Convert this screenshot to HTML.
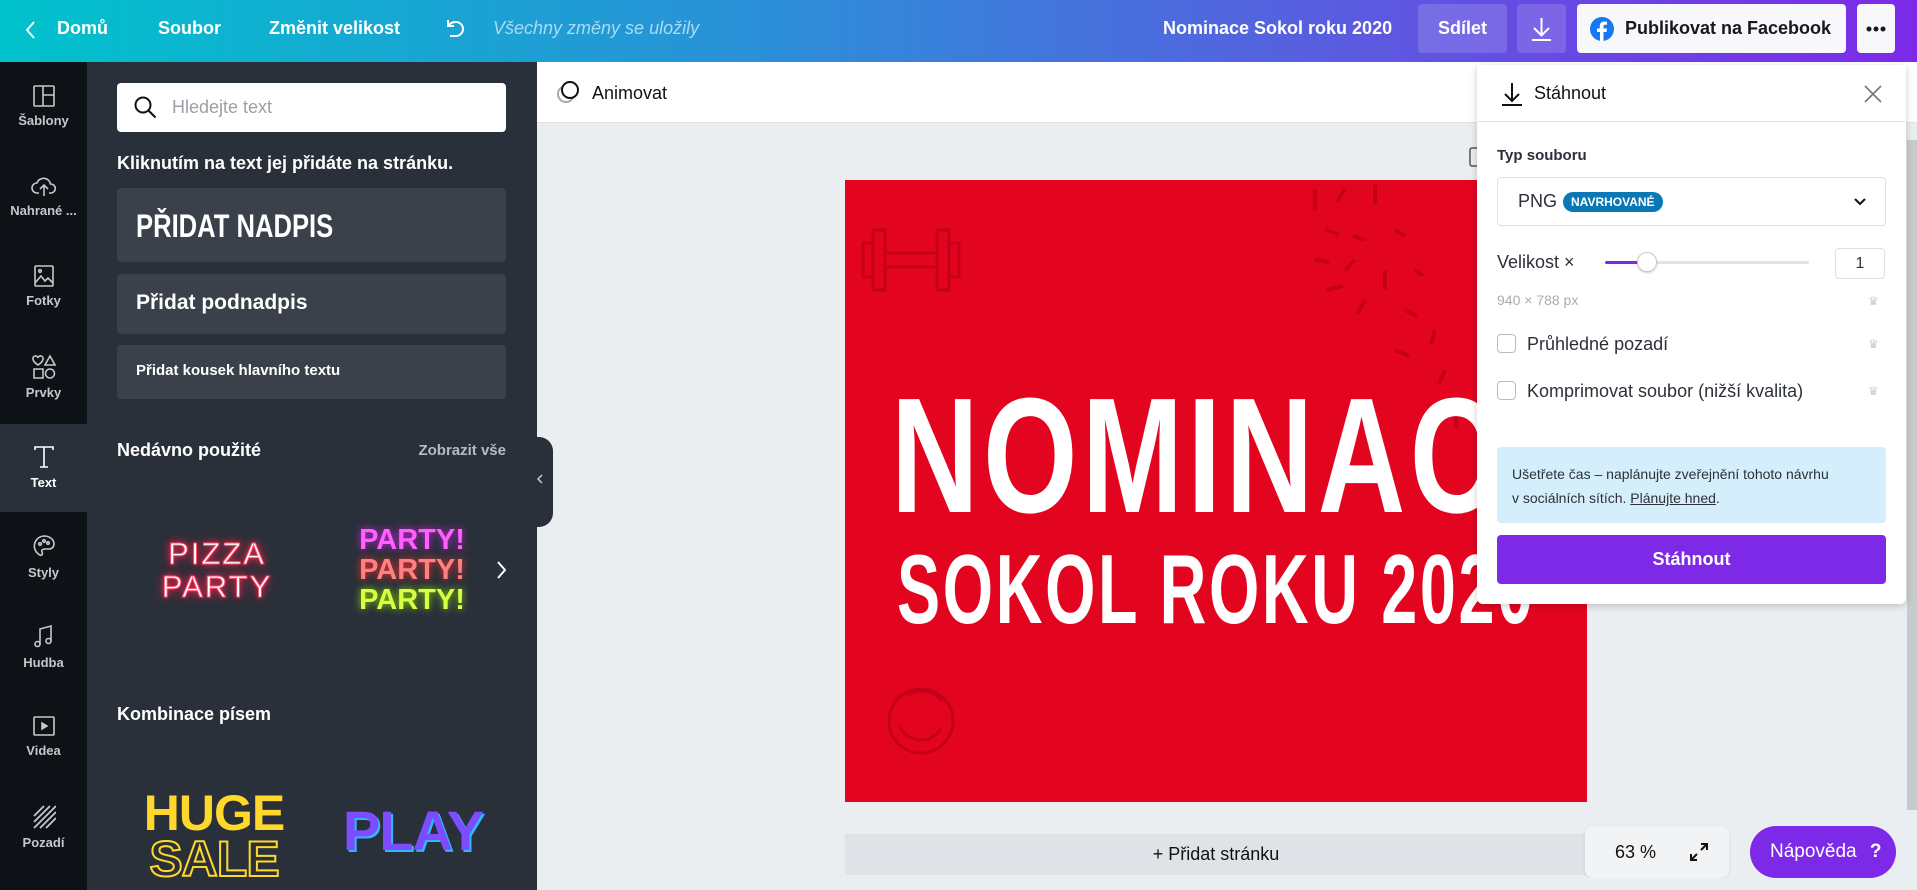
<!DOCTYPE html>
<html><head><meta charset="utf-8"><style>
*{box-sizing:border-box;margin:0;padding:0}
body{width:1917px;height:890px;overflow:hidden;font-family:"Liberation Sans",sans-serif;background:#ebeef1;position:relative}
.abs{position:absolute}
.hdr{left:0;top:0;width:1917px;height:62px;background:linear-gradient(90deg,#00c2cc 0%,#2b8fd8 40%,#5a5ce0 70%,#7d2ae8 100%)}
.hdr .t{position:absolute;top:18px;color:#fff;font-size:18px;font-weight:bold}
.rail{left:0;top:62px;width:87px;height:828px;background:#0e1217}
.ri{position:absolute;left:0;width:87px;text-align:center;color:#c5c8cc;font-size:13px;font-weight:bold}
.ri svg{display:block;margin:0 auto 5px}
.panel{left:87px;top:62px;width:450px;height:828px;background:#293039;overflow:hidden}
.card{position:absolute;left:30px;width:389px;background:#3a414a;border-radius:4px;color:#fff;font-weight:bold}
.dl{left:1477px;top:65px;width:429px;height:539px;background:#fff;border-radius:0 0 6px 6px;box-shadow:0 2px 8px rgba(0,0,0,.2)}
.dl .lbl{position:absolute;left:20px;color:#2c3038}
.crown{position:absolute;right:26px;width:12px;height:10px;color:#ccc;font-size:12px}
</style></head><body>
<div class="abs hdr">
 <svg class="abs" style="left:24px;top:19px" width="14" height="22" viewBox="0 0 14 22"><path d="M10 3L3 11l7 8" stroke="#fff" stroke-width="2" fill="none"/></svg>
 <div class="t" style="left:57px">Domů</div>
 <div class="t" style="left:158px">Soubor</div>
 <div class="t" style="left:269px">Změnit velikost</div>
 <svg class="abs" style="left:442px;top:16px" width="26" height="26" viewBox="0 0 26 26"><path d="M6 4v6h6M6 10c2-3 5-4 8-4a7 7 0 010 14H8" stroke="#fff" stroke-width="2" fill="none"/></svg>
 <div class="t" style="left:493px;font-weight:normal;font-style:italic;color:#a8dcf0">Všechny změny se uložily</div>
 <div class="t" style="left:1163px">Nominace Sokol roku 2020</div>
 <div class="abs" style="left:1418px;top:4px;width:89px;height:49px;background:rgba(255,255,255,.15);border-radius:4px;color:#fff;font-weight:bold;font-size:18px;text-align:center;line-height:49px">Sdílet</div>
 <div class="abs" style="left:1517px;top:4px;width:49px;height:49px;background:rgba(255,255,255,.15);border-radius:4px"><svg width="49" height="49" viewBox="0 0 49 49"><path d="M24.5 14v17M17 24l7.5 7.5L32 24M15 36h19" stroke="#fff" stroke-width="2" fill="none"/></svg></div>
 <div class="abs" style="left:1577px;top:4px;width:269px;height:49px;background:#f8f8fb;border-radius:4px">
  <svg class="abs" style="left:12px;top:12px" width="26" height="26" viewBox="0 0 26 26"><circle cx="13" cy="13" r="12" fill="#1877f2"/><path d="M14.5 25V16h3l.5-3.5h-3.5v-2c0-1 .3-1.7 1.8-1.7H18V5.7c-.3 0-1.4-.2-2.7-.2-2.7 0-4.5 1.6-4.5 4.6v2.4H8V16h3v9z" fill="#fff"/></svg>
  <div class="abs" style="left:48px;top:14px;font-size:18px;font-weight:bold;color:#17191c">Publikovat na Facebook</div>
 </div>
 <div class="abs" style="left:1857px;top:4px;width:38px;height:49px;background:#f8f8fb;border-radius:4px">
  <svg width="38" height="49" viewBox="0 0 38 49"><circle cx="12" cy="25" r="2.5" fill="#17191c"/><circle cx="19" cy="25" r="2.5" fill="#17191c"/><circle cx="26" cy="25" r="2.5" fill="#17191c"/></svg>
 </div>
</div>

<div class="abs rail">
 <div class="ri" style="top:22px"><svg width="24" height="24" viewBox="0 0 24 24" fill="none" stroke="#c5c8cc" stroke-width="1.6"><rect x="2" y="2" width="20" height="20" rx="1"/><path d="M11 2v20M11 11h11"/></svg>Šablony</div>
 <div class="ri" style="top:112px"><svg width="26" height="24" viewBox="0 0 26 24" fill="none" stroke="#c5c8cc" stroke-width="1.6"><path d="M8 19H6a5 5 0 010-10 7 7 0 0113.5 1A4.5 4.5 0 0120 19h-2M13 22v-10M9 15l4-4 4 4"/></svg>Nahrané ...</div>
 <div class="ri" style="top:202px"><svg width="24" height="24" viewBox="0 0 24 24" fill="none" stroke="#c5c8cc" stroke-width="1.6"><rect x="3" y="2" width="18" height="20" rx="1"/><circle cx="8" cy="7" r="1.3"/><path d="M3 19l6-7 4 5 3-3 5 5"/></svg>Fotky</div>
 <div class="ri" style="top:292px"><svg width="26" height="26" viewBox="0 0 26 26" fill="none" stroke="#c5c8cc" stroke-width="1.6"><path d="M7 11S2 8 2 5a2.5 2.5 0 015-1 2.5 2.5 0 015 1c0 3-5 6-5 6zM19 2l5 9h-10zM3 15h9v9H3z"/><circle cx="19" cy="19.5" r="4.5"/></svg>Prvky</div>
 <div class="ri" style="top:362px;height:88px;background:#293039;padding-top:20px;color:#fff"><svg width="24" height="26" viewBox="0 0 24 26" fill="none" stroke="#fff" stroke-width="1.6"><path d="M3 6V3h18v3M12 3v20M8 23h8"/></svg>Text</div>
 <div class="ri" style="top:472px"><svg width="24" height="26" viewBox="0 0 24 26" fill="none" stroke="#c5c8cc" stroke-width="1.6"><path d="M12 2a10 10 0 00-4 19c2 1 3-1 2-3s1-3 3-3h4a5 5 0 005-5c0-5-5-8-10-8z"/><circle cx="8" cy="10" r="1.3"/><circle cx="12" cy="7" r="1.3"/><circle cx="16" cy="9" r="1.3"/></svg>Styly</div>
 <div class="ri" style="top:562px"><svg width="24" height="26" viewBox="0 0 24 26" fill="none" stroke="#c5c8cc" stroke-width="1.6"><path d="M8 20V5l11-3v15"/><circle cx="5.5" cy="20" r="2.5"/><circle cx="16.5" cy="17" r="2.5"/></svg>Hudba</div>
 <div class="ri" style="top:652px"><svg width="24" height="24" viewBox="0 0 24 24" fill="none" stroke="#c5c8cc" stroke-width="1.6"><rect x="2" y="3" width="20" height="18" rx="1"/><path d="M10 9l5 3-5 3z" fill="#c5c8cc"/></svg>Videa</div>
 <div class="ri" style="top:742px"><svg width="24" height="26" viewBox="0 0 24 26" stroke="#c5c8cc" stroke-width="1.8"><path d="M2 12L12 2M2 18L18 2M2 24L24 2M8 24L24 8M14 24l10-10"/></svg>Pozadí</div>
</div>

<div class="abs panel">
 <div class="abs" style="left:30px;top:21px;width:389px;height:49px;background:#fff;border-radius:4px">
  <svg class="abs" style="left:16px;top:12px" width="26" height="26" viewBox="0 0 26 26" fill="none" stroke="#111" stroke-width="2"><circle cx="10" cy="10" r="7.5"/><path d="M15.5 15.5l7 7"/></svg>
  <div class="abs" style="left:55px;top:14px;font-size:18px;color:#9aa0a6">Hledejte text</div>
 </div>
 <div class="abs" style="left:30px;top:91px;color:#fff;font-weight:bold;font-size:18px">Kliknutím na text jej přidáte na stránku.</div>
 <div class="card" style="top:126px;height:74px;padding:20px 0 0 19px"><div style="font-size:32px;transform:scaleX(0.8);transform-origin:left;white-space:nowrap">PŘIDAT NADPIS</div></div>
 <div class="card" style="top:212px;height:60px;font-size:21px;padding:17px 0 0 19px">Přidat podnadpis</div>
 <div class="card" style="top:283px;height:54px;font-size:15px;padding:17px 0 0 19px">Přidat kousek hlavního textu</div>
 <div class="abs" style="left:30px;top:378px;color:#fff;font-weight:bold;font-size:18px">Nedávno použité</div>
 <div class="abs" style="left:300px;top:380px;color:#b8bcc2;font-weight:bold;font-size:15px;width:119px;text-align:right;white-space:nowrap">Zobrazit vše</div>
 <div class="abs" style="left:72px;top:475px;width:116px;text-align:center;color:#fff;font-size:31px;line-height:33px;letter-spacing:2px;text-shadow:0 0 6px #ff2050,0 0 12px #ff2050;-webkit-text-stroke:1px #ff4d6a">PIZZA<br>PARTY</div>
 <div class="abs" style="left:266px;top:463px;width:118px;text-align:center;font-size:29px;line-height:30px;font-weight:bold">
  <div style="color:#ff60ff;text-shadow:0 0 8px #d020e0">PARTY!</div><div style="color:#ff8080;text-shadow:0 0 8px #ff3030">PARTY!</div><div style="color:#d8ff40;text-shadow:0 0 8px #90e000">PARTY!</div></div>
 <svg class="abs" style="left:407px;top:497px" width="14" height="22" viewBox="0 0 14 22"><path d="M4 3l7 8-7 8" stroke="#fff" stroke-width="2" fill="none"/></svg>
 <div class="abs" style="left:30px;top:642px;color:#fff;font-weight:bold;font-size:18px">Kombinace písem</div>
 <div class="abs" style="left:51px;top:728px;width:152px;font-size:50px;line-height:46px;font-weight:900;color:#ffd82b;text-align:center;letter-spacing:-1px">HUGE<div style="color:transparent;-webkit-text-stroke:2px #ffd82b">SALE</div></div>
 <div class="abs" style="left:250px;top:736px;width:152px;font-size:56px;font-weight:900;color:#7b4dff;text-shadow:2px 2px 0 #30b8ff;text-align:center;letter-spacing:-1px">PLAY</div>
</div>
<div class="abs" style="left:537px;top:437px;width:16px;height:90px;background:#293039;border-radius:0 14px 14px 0"></div>
<svg class="abs" style="left:535px;top:472px" width="10" height="14" viewBox="0 0 10 14"><path d="M7 3L3 7l4 4" stroke="#ccc" stroke-width="1.5" fill="none"/></svg>

<div class="abs" style="left:537px;top:62px;width:1380px;height:61px;background:#fff;border-bottom:1px solid #dfe2e6">
 <svg class="abs" style="left:18px;top:18px" width="26" height="26" viewBox="0 0 26 26" fill="none"><circle cx="11" cy="14" r="8" stroke="#aaa" stroke-width="2"/><circle cx="15" cy="10" r="8" fill="#fff" stroke="#111" stroke-width="2"/></svg>
 <div class="abs" style="left:55px;top:21px;font-size:18px;color:#111">Animovat</div>
</div>

<div class="abs" style="left:845px;top:180px;width:742px;height:622px;background:#e30520"></div>
<div class="abs" style="left:845px;top:180px;width:742px;height:622px;overflow:visible">
 <svg class="abs" style="left:14px;top:45px" width="104" height="70" viewBox="0 0 104 70" fill="none" stroke="#c70019" stroke-width="3"><rect x="14" y="5" width="12" height="60"/><rect x="78" y="5" width="12" height="60"/><rect x="4" y="18" width="10" height="34"/><rect x="90" y="18" width="10" height="34"/><rect x="26" y="28" width="52" height="14"/></svg>
 <svg class="abs" style="left:40px;top:505px" width="72" height="72" viewBox="0 0 72 72" fill="none" stroke="#c70019" stroke-width="3"><circle cx="36" cy="36" r="32"/><path d="M14 40c6 16 30 22 42 4M22 10c10-6 28-6 34 6"/></svg>
 <svg class="abs" style="left:460px;top:0" width="200" height="260" viewBox="0 0 200 260" stroke="#c70019" stroke-width="4"><path d="M10 10v20M40 8l-8 14M70 4v20M20 50l14 4M48 56l12 4M90 50l10 6M10 80l14 2M40 90l10-10M80 90v20M110 90l8 6M22 110l16-4M60 120l-8 14M100 130l12 6M130 150l-4 14M90 170l14 6M140 190l-6 14M150 230l2 18"/></svg>
 <div class="abs" style="left:46px;top:194px;color:#fff;font-weight:bold;font-size:164px;line-height:164px;letter-spacing:6px;transform:scaleX(0.74);transform-origin:left;white-space:nowrap">NOMINACE</div>
 <div class="abs" style="left:52px;top:360px;color:#fff;font-weight:bold;font-size:98px;line-height:98px;letter-spacing:4px;transform:scaleX(0.66);transform-origin:left;white-space:nowrap">SOKOL ROKU 2020</div>
</div>
<svg class="abs" style="left:1469px;top:147px" width="10" height="20"><rect x="1" y="1" width="10" height="18" rx="2" fill="none" stroke="#555" stroke-width="1.5"/></svg>

<div class="abs" style="left:845px;top:834px;width:742px;height:41px;background:#dfe3e8;text-align:center;font-size:18px;line-height:41px;color:#111">+ Přidat stránku</div>
<div class="abs" style="left:1585px;top:826px;width:144px;height:52px;background:#f2f3f5;border-radius:8px;box-shadow:0 1px 3px rgba(0,0,0,.1)">
 <div class="abs" style="left:30px;top:16px;font-size:18px;color:#111">63 %</div>
 <svg class="abs" style="left:103px;top:15px" width="22" height="22" viewBox="0 0 22 22" fill="none" stroke="#111" stroke-width="2"><path d="M13 3h6v6M19 3l-6 6M9 19H3v-6M3 19l6-6"/></svg>
</div>
<div class="abs" style="left:1750px;top:826px;width:146px;height:52px;background:#7d2ae8;border-radius:26px;color:#fff;font-size:19px;line-height:52px;padding-left:20px">Nápověda <b style="margin-left:8px">?</b></div>
<div class="abs" style="left:1907px;top:140px;width:10px;height:670px;background:#c8cacd"></div>
<div class="abs" style="left:537px;top:878px;width:1380px;height:12px;background:#ebeef1"></div>

<div class="abs dl">
 <svg class="abs" style="left:22px;top:16px" width="26" height="26" viewBox="0 0 26 26" fill="none" stroke="#111" stroke-width="2"><path d="M13 2v18M6 13l7 7 7-7M3 24h20"/></svg>
 <div class="abs" style="left:57px;top:18px;font-size:18px;color:#111">Stáhnout</div>
 <svg class="abs" style="left:386px;top:19px" width="20" height="20" viewBox="0 0 20 20" stroke="#777" stroke-width="1.6"><path d="M2 2l16 16M18 2L2 18"/></svg>
 <div class="abs" style="left:0;top:56px;width:429px;height:1px;background:#e2e4e7"></div>
 <div class="lbl" style="top:82px;font-size:15px;font-weight:bold">Typ souboru</div>
 <div class="abs" style="left:20px;top:112px;width:389px;height:49px;border:1px solid #dcdfe3;border-radius:4px">
  <div class="abs" style="left:20px;top:13px;font-size:18px;color:#2c3038">PNG</div>
  <div class="abs" style="left:65px;top:14px;height:20px;padding:0 8px;background:#0a78b5;border-radius:10px;color:#fff;font-size:12px;font-weight:bold;line-height:20px">NAVRHOVANÉ</div>
  <svg class="abs" style="left:355px;top:17px" width="14" height="14" viewBox="0 0 14 14"><path d="M2 4l5 5 5-5" stroke="#111" stroke-width="2" fill="none"/></svg>
 </div>
 <div class="lbl" style="top:187px;font-size:18px">Velikost ×</div>
 <div class="abs" style="left:128px;top:196px;width:204px;height:3px;background:#e2e4e7;border-radius:2px"></div>
 <div class="abs" style="left:128px;top:196px;width:42px;height:3px;background:#7d2ae8;border-radius:2px"></div>
 <div class="abs" style="left:160px;top:187px;width:20px;height:20px;background:#fff;border:1px solid #ccc;border-radius:50%;box-shadow:0 1px 2px rgba(0,0,0,.2)"></div>
 <div class="abs" style="left:358px;top:183px;width:50px;height:31px;border:1px solid #dcdfe3;border-radius:4px;text-align:center;line-height:29px;font-size:16px;color:#333">1</div>
 <div class="lbl" style="top:227px;font-size:14px;color:#a8acb2">940 × 788 px</div>
 <div class="crown" style="top:229px">♛</div>
 <div class="abs" style="left:20px;top:269px;width:19px;height:19px;border:1.5px solid #bbb;border-radius:4px"></div>
 <div class="lbl" style="left:50px;top:269px;font-size:18px">Průhledné pozadí</div>
 <div class="crown" style="top:272px">♛</div>
 <div class="abs" style="left:20px;top:316px;width:19px;height:19px;border:1.5px solid #bbb;border-radius:4px"></div>
 <div class="lbl" style="left:50px;top:316px;font-size:18px">Komprimovat soubor (nižší kvalita)</div>
 <div class="crown" style="top:319px">♛</div>
 <div class="abs" style="left:20px;top:382px;width:389px;height:76px;background:#d4eefb;border-radius:4px;padding:15px 0 0 15px;font-size:14px;line-height:24px;color:#2c3038">Ušetřete čas – naplánujte zveřejnění tohoto návrhu<br>v sociálních sítích. <u>Plánujte hned</u>.</div>
 <div class="abs" style="left:20px;top:470px;width:389px;height:49px;background:#7d2ae8;border-radius:4px;color:#fff;font-weight:bold;font-size:18px;text-align:center;line-height:49px">Stáhnout</div>
</div>
</body></html>
